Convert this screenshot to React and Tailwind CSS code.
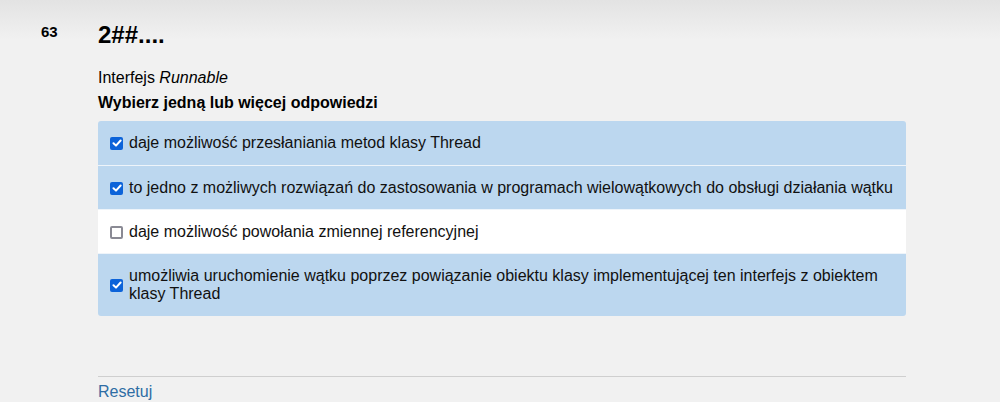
import React from "react";

const options = [
  { text: "daje możliwość przesłaniania metod klasy Thread", checked: true },
  {
    text: "to jedno z możliwych rozwiązań do zastosowania w programach wielowątkowych do obsługi działania wątku",
    checked: true,
  },
  { text: "daje możliwość powołania zmiennej referencyjnej", checked: false },
  {
    text: "umożliwia uruchomienie wątku poprzez powiązanie obiektu klasy implementującej ten interfejs z obiektem klasy Thread",
    checked: true,
  },
];

function Box({ checked }) {
  if (checked) {
    return (
      <span className="flex h-[13px] w-[13px] shrink-0 items-center justify-center rounded-[2px] bg-[#0c63d9]">
        <svg width="10" height="10" viewBox="0 0 10 10" fill="none">
          <path d="M1.5 5.2 L4 7.6 L8.6 2.5" stroke="white" strokeWidth="2" strokeLinecap="round" strokeLinejoin="round" />
        </svg>
      </span>
    );
  }
  return <span className="block h-[13px] w-[13px] shrink-0 rounded-[2px] border-2 border-[#8a8a94] bg-white" />;
}

export default function App() {
  return (
    <div
      className="flex min-h-[402px] w-full bg-[linear-gradient(to_bottom,#e3e3e3_0px,#f1f1f1_40px)] text-black"
      style={{ fontFamily: '"Liberation Sans", Arial, sans-serif' }}
    >
      <div className="w-[98px] shrink-0 pl-[41px] pt-[24px]">
        <div className="text-[15px] font-bold leading-[16px]">63</div>
      </div>
      <div className="w-[808px] shrink-0">
        <h1 className="pt-[21px] text-[24px] font-bold leading-[28px]">2##....</h1>
        <p className="mt-[20px] text-[16px] leading-[18px]">
          Interfejs <em>Runnable</em>
        </p>
        <p className="mt-[7px] text-[16px] font-bold leading-[18px]">Wybierz jedną lub więcej odpowiedzi</p>
        <div className="mt-[9px] overflow-hidden rounded-[3px]">
          {options.map((o, i) => (
            <div
              key={i}
              className={
                "flex items-center gap-[6px] px-[12px] pt-[13px] text-[16px] leading-[18px] text-[#111] " +
                (i > 0 ? "border-t border-[#eef4fa] " : "") +
                (i === 1 || i === 2 ? "pb-[12px] " : "pb-[13px] ") +
                (o.checked ? "bg-[#bcd7ef]" : "bg-white")
              }
            >
              <Box checked={o.checked} />
              <span>{o.text}</span>
            </div>
          ))}
        </div>
        <div className="mt-[60px] border-t border-[#cfcfcf]" />
        <div className="pt-[6px] text-[16px] leading-[18px] text-[#2e6da4]">Resetuj</div>
      </div>
    </div>
  );
}
